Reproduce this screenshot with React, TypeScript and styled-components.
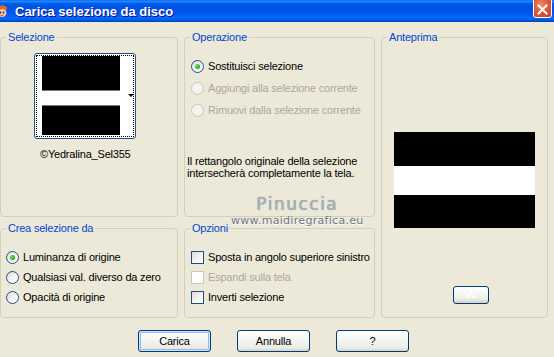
import React from 'react';
import styled, { createGlobalStyle } from 'styled-components';

const GlobalStyle = createGlobalStyle`
  html, body {
    margin: 0;
    padding: 0;
    background: #ece9d8;
  }
  body {
    font-family: "Liberation Sans", Arial, sans-serif;
    font-size: 11px;
    letter-spacing: -0.2px;
    color: #000;
  }
`;

const Window = styled.div`
  width: 554px;
  height: 357px;
  overflow: hidden;
  display: flex;
  flex-direction: column;
  background: #ece9d8;
`;

const TitleBar = styled.div`
  height: 22px;
  flex: none;
  display: flex;
  align-items: center;
  background: linear-gradient(to bottom, #0058ee 0%, #3593ff 5%, #127dff 9%, #036ffc 12%, #0262ee 16%, #0057e5 22%, #0054e3 28%, #0055eb 58%, #005bf5 68%, #026afe 78%, #0062ef 88%, #0052d6 94%, #0040ab 100%);
`;

const AppIcon = styled.svg`
  width: 16px;
  height: 16px;
  margin-left: -6px;
  flex: none;
`;

const TitleText = styled.div`
  margin-left: 5px;
  color: #fff;
  font-weight: bold;
  font-size: 13px;
  letter-spacing: 0;
  text-shadow: 1px 1px 0 #0f1089;
  flex: 1;
`;

const CloseButton = styled.div`
  width: 19px;
  height: 21px;
  margin-right: 2px;
  align-self: flex-start;
  margin-top: -3px;
  box-sizing: border-box;
  border: 1px solid #fff;
  border-radius: 3px;
  background: radial-gradient(circle at 40% 35%, #f08a6e 0%, #e05a3c 45%, #c8401f 100%);
  display: flex;
  align-items: center;
  justify-content: center;
  padding-top: 3px;
`;

const Body = styled.div`
  display: grid;
  grid-template-columns: 178px 191px 167px;
  grid-template-rows: 186px 96px;
  column-gap: 6px;
  row-gap: 5px;
  padding-top: 9px;
`;

const Group = styled.fieldset<{ $side?: boolean }>`
  margin: 0;
  min-width: 0;
  box-sizing: border-box;
  border: 1px solid #d0d0bf;
  border-radius: 4px;
  padding: 0;
  position: relative;
  display: flex;
  flex-direction: column;
  ${p => (p.$side ? 'grid-column: 3; grid-row: 1 / span 2;' : '')}
`;

const Legend = styled.legend`
  margin-left: 5px;
  padding: 0 2px;
  color: #0046d5;
  line-height: 13px;
`;

const ThumbBox = styled.div`
  align-self: flex-start;
  margin: 9px 0 0 33px;
  width: 102px;
  height: 86px;
  box-sizing: border-box;
  border: 1px solid #1c5180;
  border-radius: 3px;
  background: #fff;
  padding: 1px;
`;

const FocusRing = styled.div`
  height: 100%;
  box-sizing: border-box;
  border: 1px dotted #000;
  display: flex;
  align-items: flex-start;
  padding: 0 0 0 5px;
`;

const Bands = styled.div<{ $w: number }>`
  width: ${p => p.$w}px;
  display: flex;
  flex-direction: column;
  flex: none;
`;

const Band = styled.div<{ $h: number; $white?: boolean; $edge?: boolean }>`
  height: ${p => p.$h}px;
  box-sizing: border-box;
  background: ${p => (p.$white ? '#fff' : '#000')};
  ${p => (p.$edge ? 'border-top: 1px solid #7a7a7a; border-bottom: 1px solid #7a7a7a;' : '')}
`;

const DropArrow = styled.div`
  margin: 38px 0 0 8px;
  width: 0;
  height: 0;
  border-left: 3px solid transparent;
  border-right: 3px solid transparent;
  border-top: 3px solid #000;
`;

const Caption = styled.div`
  margin: 9px 0 0 39px;
`;

const OptionList = styled.div<{ $gap: number; $top: number; $left: number }>`
  display: flex;
  flex-direction: column;
  gap: ${p => p.$gap}px;
  margin: ${p => p.$top}px 0 0 ${p => p.$left}px;
`;

const OptionRow = styled.div<{ $disabled?: boolean }>`
  display: flex;
  align-items: center;
  gap: 4px;
  height: 14px;
  white-space: nowrap;
  color: ${p => (p.$disabled ? '#aca899' : '#000')};
`;

const RadioMark = styled.span<{ $disabled?: boolean; $checked?: boolean }>`
  width: 13px;
  height: 13px;
  box-sizing: border-box;
  flex: none;
  border-radius: 50%;
  border: 1px solid ${p => (p.$disabled ? '#cac8bb' : '#1c5180')};
  background: ${p => (p.$disabled ? '#f4f3ee' : 'linear-gradient(135deg, #dcdcd7 0%, #f6f6f4 60%, #ffffff 100%)')};
  display: flex;
  align-items: center;
  justify-content: center;
  &::after {
    content: '';
    display: ${p => (p.$checked ? 'block' : 'none')};
    width: 5px;
    height: 5px;
    border-radius: 50%;
    background: radial-gradient(circle at 35% 35%, #68e264 0%, #21a121 80%);
  }
`;

const CheckMark = styled.span<{ $disabled?: boolean }>`
  width: 13px;
  height: 13px;
  box-sizing: border-box;
  flex: none;
  border: 1px solid ${p => (p.$disabled ? '#cac8bb' : '#1c5180')};
  background: ${p => (p.$disabled ? '#fff' : 'linear-gradient(135deg, #dcdcd7 0%, #f4f4f2 60%, #ffffff 100%)')};
`;

const Note = styled.div`
  margin: 38px 0 0 2px;
  line-height: 12px;
  white-space: nowrap;
`;

const Watermark = styled.div`
  position: absolute;
  left: 46px;
  top: 150px;
  display: flex;
  flex-direction: column;
  align-items: center;
  pointer-events: none;
`;

const WatermarkName = styled.div`
  font-family: "DejaVu Sans", sans-serif;
  font-size: 17px;
  letter-spacing: 1.5px;
  color: #a7b0bb;
  text-shadow: 0 0 1px #7a8594;
  line-height: 20px;
`;

const WatermarkSite = styled.div`
  font-family: "DejaVu Sans", sans-serif;
  font-size: 11px;
  letter-spacing: 0.3px;
  color: #6c7684;
  text-shadow: 0 1px 0 #fff;
  line-height: 14px;
`;

const PreviewWrap = styled.div`
  align-self: center;
  margin-top: 88px;
`;

const SmallButton = styled.div`
  align-self: flex-start;
  margin: 58px 0 0 71px;
  width: 36px;
  height: 18px;
  box-sizing: border-box;
  border: 1px solid #003c74;
  border-radius: 3px;
  background: linear-gradient(to bottom, #ffffff 0%, #f0f0ea 70%, #d6d0c5 100%);
  display: flex;
  align-items: center;
  justify-content: center;
`;

const ButtonRow = styled.div`
  display: flex;
  gap: 26px;
  padding-left: 138px;
  margin-top: 12px;
`;

const PushButton = styled.div<{ $default?: boolean }>`
  width: 73px;
  height: 22px;
  box-sizing: border-box;
  border: 1px solid #003c74;
  border-radius: 3px;
  background: linear-gradient(to bottom, #ffffff 0%, #f4f4f0 50%, #ecebe6 85%, #d6d0c5 100%);
  display: flex;
  align-items: center;
  justify-content: center;
  ${p => (p.$default ? 'box-shadow: inset 0 0 0 1px #cee7ff, inset 0 0 0 2px #98b8ea;' : '')}
`;

const Radio = ({ label, checked, disabled }: { label: string; checked?: boolean; disabled?: boolean }) => (
  <OptionRow $disabled={disabled}>
    <RadioMark $checked={checked} $disabled={disabled} />
    {label}
  </OptionRow>
);

const Check = ({ label, disabled }: { label: string; disabled?: boolean }) => (
  <OptionRow $disabled={disabled}>
    <CheckMark $disabled={disabled} />
    {label}
  </OptionRow>
);

export default function App() {
  return (
    <Window>
      <GlobalStyle />
      <TitleBar>
        <AppIcon viewBox="0 0 16 16">
          <path d="M3 5 Q8 0 13 4 L12 9 Q8 6 4 9 Z" fill="#e0672a" />
          <ellipse cx="8" cy="10" rx="4.5" ry="4" fill="#f6c9a0" />
          <circle cx="6.5" cy="9.5" r="0.9" fill="#3a2a6a" />
          <circle cx="9.5" cy="9.5" r="0.9" fill="#3a2a6a" />
          <path d="M6.5 12 Q8 13 9.5 12" stroke="#c0392b" strokeWidth="0.8" fill="none" />
          <path d="M2 4 L5 2 L4 6 Z" fill="#f0a030" />
        </AppIcon>
        <TitleText>Carica selezione da disco</TitleText>
        <CloseButton>
          <svg width="11" height="11" viewBox="0 0 11 11">
            <path d="M1.5 1.5 L9.5 9.5 M9.5 1.5 L1.5 9.5" stroke="#fff" strokeWidth="2" strokeLinecap="square" />
          </svg>
        </CloseButton>
      </TitleBar>

      <Body>
        <Group>
          <Legend>Selezione</Legend>
          <ThumbBox>
            <FocusRing>
              <Bands $w={78}>
                <Band $h={34} />
                <Band $h={16} $white $edge />
                <Band $h={29} />
              </Bands>
              <DropArrow />
            </FocusRing>
          </ThumbBox>
          <Caption>©Yedralina_Sel355</Caption>
        </Group>

        <Group>
          <Legend>Operazione</Legend>
          <OptionList $gap={8} $top={15} $left={6}>
            <Radio label="Sostituisci selezione" checked />
            <Radio label="Aggiungi alla selezione corrente" disabled />
            <Radio label="Rimuovi dalla selezione corrente" disabled />
          </OptionList>
          <Note>
            Il rettangolo originale della selezione
            <br />
            intersecherà completamente la tela.
          </Note>
          <Watermark>
            <WatermarkName>Pinuccia</WatermarkName>
            <WatermarkSite>www.maidiregrafica.eu</WatermarkSite>
          </Watermark>
        </Group>

        <Group $side>
          <Legend>Anteprima</Legend>
          <PreviewWrap>
            <Bands $w={141}>
              <Band $h={34} />
              <Band $h={29} $white />
              <Band $h={33} />
            </Bands>
          </PreviewWrap>
          <SmallButton>
            <svg width="12" height="8" viewBox="0 0 12 8">
              <circle cx="3" cy="5" r="1.5" fill="#fff" />
              <circle cx="6" cy="2" r="1.5" fill="#fff" />
              <circle cx="9" cy="5" r="1.5" fill="#fff" />
            </svg>
          </SmallButton>
        </Group>

        <Group>
          <Legend>Crea selezione da</Legend>
          <OptionList $gap={6} $top={15} $left={5}>
            <Radio label="Luminanza di origine" checked />
            <Radio label="Qualsiasi val. diverso da zero" />
            <Radio label="Opacità di origine" />
          </OptionList>
        </Group>

        <Group>
          <Legend>Opzioni</Legend>
          <OptionList $gap={6} $top={15} $left={6}>
            <Check label="Sposta in angolo superiore sinistro" />
            <Check label="Espandi sulla tela" disabled />
            <Check label="Inverti selezione" />
          </OptionList>
        </Group>
      </Body>

      <ButtonRow>
        <PushButton $default>Carica</PushButton>
        <PushButton>Annulla</PushButton>
        <PushButton>?</PushButton>
      </ButtonRow>
    </Window>
  );
}
